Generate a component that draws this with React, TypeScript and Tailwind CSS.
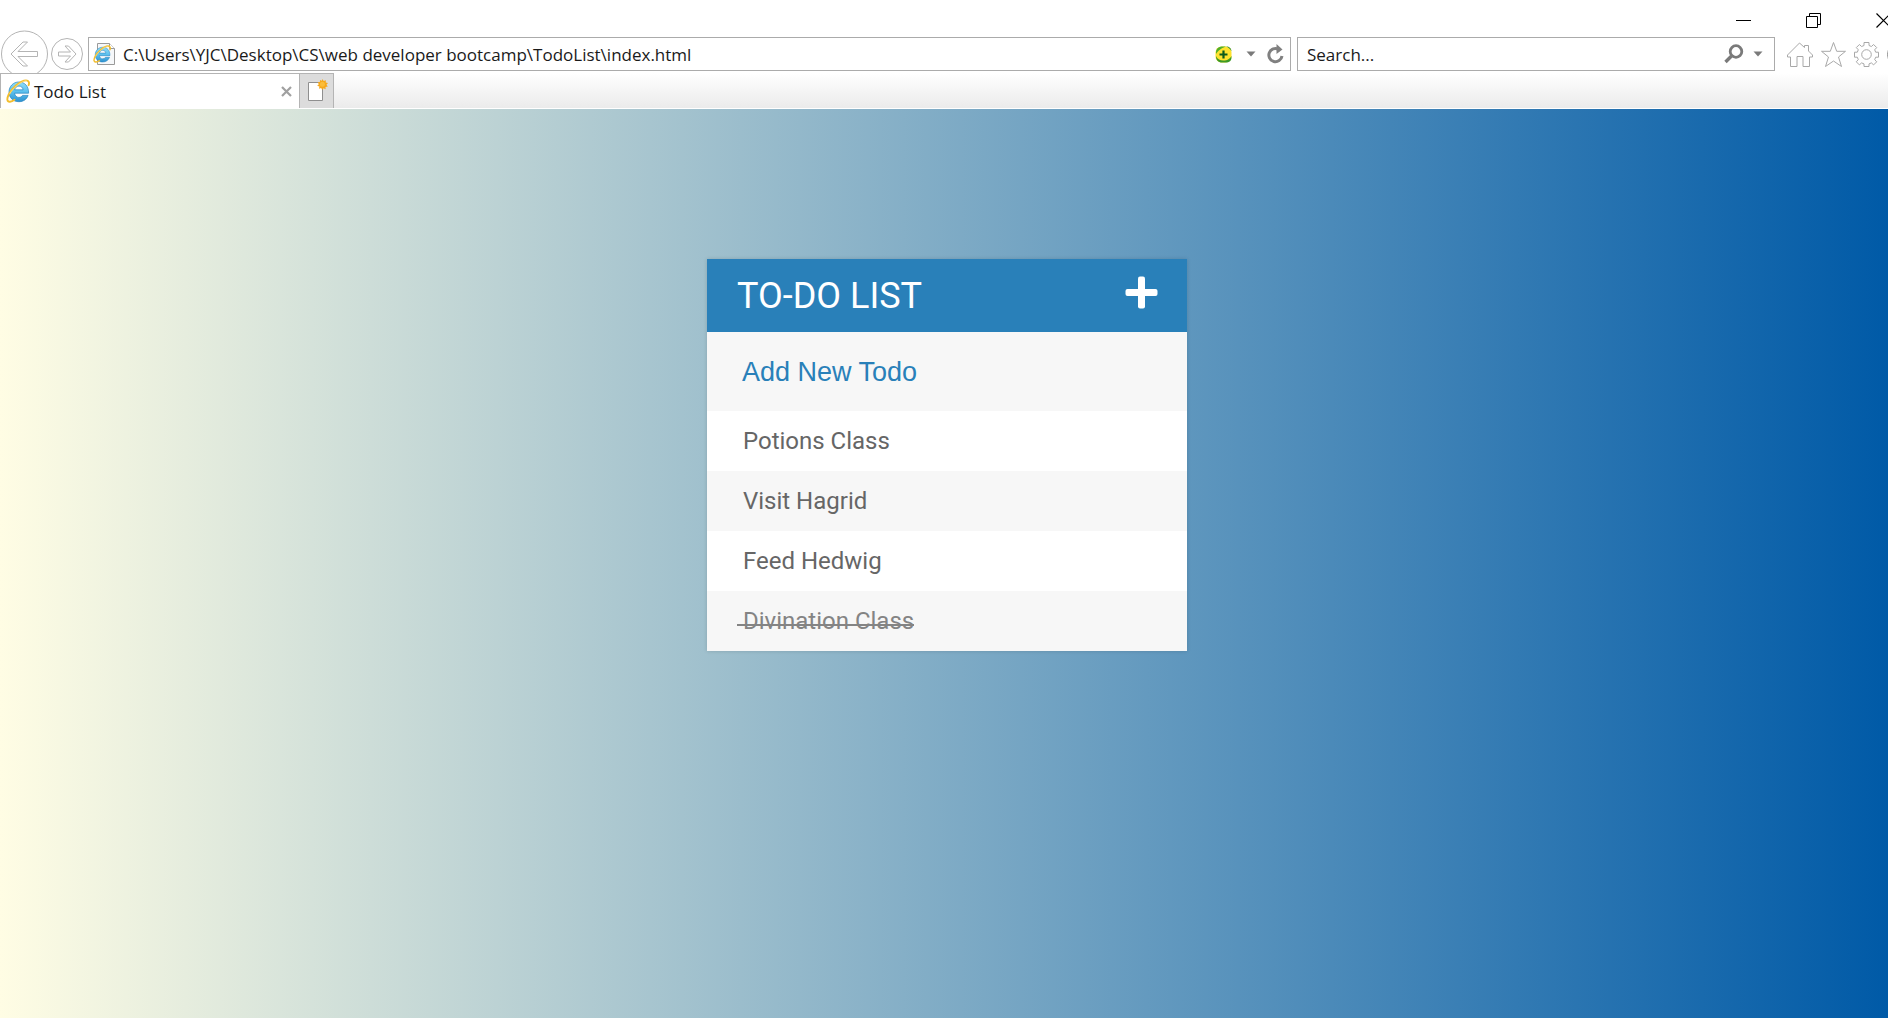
import React, { useId, useState } from "react";

function IeLogo({ className }: { className: string }) {
  const id = useId();
  return (
    <svg viewBox="0 0 24 24" className={className} fill="none" aria-hidden="true">
      <defs>
        <linearGradient id={id} x1="0" y1="0" x2="0" y2="1">
          <stop offset="0" stopColor="#8fdcf8" />
          <stop offset="0.5" stopColor="#5cc0ee" />
          <stop offset="1" stopColor="#2e92d0" />
        </linearGradient>
      </defs>
      <path
        d="M22.600 14.200H8.600c.3 2.700 2 4.200 4.300 4.200 1.600 0 2.900-.7 3.600-2h5.600c-1.400 4-4.900 6.300-9.200 6.300C7 22.700 3 18.600 3 13S7.200 3 12.900 3s9.900 4 9.700 11.200zM8.700 10.800h8.400c-.3-2.300-1.900-3.700-4.100-3.700s-3.900 1.400-4.300 3.700z"
        fill={`url(#${id})`}
        stroke="#2583bf"
        strokeWidth="0.700"
      />
      <path
        d="M22.600 6.200C23.600 3.600 22.800 1.400 20 1.400 14.500 1.500 6 9 2.700 15.500 0.600 19.800 0.900 23 4 22.700c1.500-.1 3-.8 4.500-1.900"
        stroke="#f3bd2c"
        strokeWidth="1.900"
        strokeLinecap="round"
      />
      <path d="M20.500 1.600C15 2.200 7 9 3.600 15" stroke="#fbe38a" strokeWidth="0.800" />
    </svg>
  );
}

function Caret() {
  return (
    <svg viewBox="0 0 10 6" className="h-[6px] w-[10px]" aria-hidden="true">
      <path d="M0.500 0.500h9L5 5.500z" fill="#7a7a7a" />
    </svg>
  );
}

function WindowControls() {
  return (
    <div className="flex h-[37px] items-center justify-end gap-[54px] pt-1 pr-5">
      <button type="button" aria-label="Minimize" className="size-4">
        <svg viewBox="0 0 16 16" className="size-4" fill="none" stroke="#000">
          <path d="M0 7.500h15" />
        </svg>
      </button>
      <button type="button" aria-label="Restore" className="size-4">
        <svg viewBox="0 0 16 16" className="size-4" fill="none" stroke="#000">
          <path d="M0.500 3.500h11v11h-11zM3.500 3.500v-3h11v11h-3" />
        </svg>
      </button>
      <button type="button" aria-label="Close" className="size-4">
        <svg viewBox="0 0 16 16" className="size-4" fill="none" stroke="#000" strokeWidth="1.200">
          <path d="M0.500 0.500l14 14M14.500 0.500l-14 14" />
        </svg>
      </button>
    </div>
  );
}

function NavRow() {
  return (
    <div className="flex h-9 items-start">
      <button type="button" aria-label="Back" className="-mt-[7px] ml-px size-[48px] shrink-0">
        <svg viewBox="0 0 48 48" className="size-[48px]" fill="none" stroke="#b4b4b4">
          <circle cx="23.500" cy="24" r="23" />
          <path d="M10 24l12-12h4.500l-9.500 9.500h19.500v5H17l9.500 9.500H22z" strokeLinejoin="round" />
        </svg>
      </button>
      <button type="button" aria-label="Forward" className="mt-px ml-[2px] size-8 shrink-0">
        <svg viewBox="0 0 32 32" className="size-8" fill="none" stroke="#b4b4b4">
          <circle cx="16" cy="16" r="15.500" />
          <path d="M25 16l-7.500 8h-3.500l5.500-6H7.500v-4h12l-5.500-6h3.500z" strokeLinejoin="round" />
        </svg>
      </button>
      <form
        onSubmit={(e) => e.preventDefault()}
        className="ml-[5px] flex h-[34px] min-w-0 flex-1 items-center border border-[#ababab] bg-white pr-[5px] pl-1"
      >
        <span className="relative block size-[26px] shrink-0">
          <svg viewBox="0 0 26 26" className="size-[26px]" fill="#f6f8fa" stroke="#9a9a9a" aria-hidden="true">
            <path d="M4.500 2.500h12l5 5v16h-17z" />
            <path d="M16.500 2.500v5h5" fill="#fff" />
          </svg>
          <IeLogo className="absolute top-1 left-0 size-[18px]" />
        </span>
        <input
          aria-label="Address"
          defaultValue="C:\Users\YJC\Desktop\CS\web developer bootcamp\TodoList\index.html"
          className="ml-1 min-w-0 flex-1 bg-transparent pt-[2px] font-['Open_Sans',sans-serif] text-[17px] leading-6 text-[#1a1a1a] outline-none"
        />
        <button type="button" aria-label="Add-on" className="size-[17px]">
          <svg viewBox="0 0 17 17" className="size-[17px]">
            <rect x="0.500" y="0.500" width="16" height="16" rx="6" fill="#ffe22e" />
            <path d="M1 6C1.500 2 4 0.500 8 0.500h3C8 1.500 4.500 3 1 8z" fill="#4fae2c" />
            <path d="M11 0.500c3.500 0 5.500 2 5.500 5C15.500 3 13.500 1.500 11 0.500z" fill="#2f8b22" />
            <path d="M1 10c2 4 5 5 9 4.500 3-.5 5-2 6.500-4.500v1c0 4-2 5.500-6 5.500H7c-4 0-6-2.500-6-6.500z" fill="#3c9a26" />
            <path d="M8.500 4.500v8M4.500 8.500h8" stroke="#0d5a1c" strokeWidth="2.200" />
          </svg>
        </button>
        <button type="button" aria-label="Show address history" className="ml-[14px] flex h-6 w-[10px] items-center">
          <Caret />
        </button>
        <button type="button" aria-label="Refresh" className="ml-[11px] h-5 w-[18px]">
          <svg viewBox="0 0 18 20" className="h-5 w-[18px]" fill="none">
            <path d="M11.500 5.200A6.600 6.600 0 1 0 15 12" stroke="#808080" strokeWidth="3" />
            <path d="M9.500 0l6 5.500-6 4.500z" fill="#808080" />
          </svg>
        </button>
      </form>
      <form
        onSubmit={(e) => e.preventDefault()}
        className="ml-[6px] flex h-[34px] w-[478px] items-center border border-[#ababab] bg-white pr-[11px] pl-[9px]"
      >
        <input
          aria-label="Search"
          placeholder="Search..."
          className="min-w-0 flex-1 bg-transparent pt-[2px] font-['Open_Sans',sans-serif] text-[17px] leading-6 text-[#1a1a1a] outline-none placeholder:text-[#1a1a1a]"
        />
        <button type="button" aria-label="Search" className="size-5">
          <svg viewBox="0 0 20 20" className="size-5" fill="none" stroke="#7a7a7a">
            <circle cx="12" cy="7.500" r="5.800" strokeWidth="2.800" />
            <path d="M7.500 12L1.500 18" strokeWidth="3.400" />
          </svg>
        </button>
        <button type="button" aria-label="Search options" className="ml-[9px] flex h-6 w-[10px] items-center">
          <Caret />
        </button>
      </form>
      <div className="ml-3 flex gap-[8px] pt-[5px]">
        <button type="button" aria-label="Home" className="size-[26px]">
          <svg viewBox="0 0 26 26" className="size-[26px]" fill="none" stroke="#a8a8a8" strokeLinejoin="round">
            <path d="M0.500 13L12.500 1l5 4.500v-2h4V9l4 4v2h-3v9.500h-6.500v-10h-6v10H3.500V15h-3z" />
          </svg>
        </button>
        <button type="button" aria-label="Favorites" className="size-[25px]">
          <svg viewBox="0 0 25 25" className="size-[25px]" fill="none" stroke="#a8a8a8" strokeLinejoin="round">
            <path d="M12.500 0.500l3.200 8.800h8.800l-7 5.700 3 9.500-8-5.500-8 5.500 3-9.500-7-5.700h8.800z" />
          </svg>
        </button>
        <button type="button" aria-label="Tools" className="size-[25px]">
          <svg viewBox="0 0 25 25" className="size-[25px]" fill="none" stroke="#a8a8a8" strokeLinejoin="round">
            <path d="M10 0.500h5v3l2.400 1 2.200-2 3.100 3.100-2 2.200 1 2.400h2.800v5h-2.800l-1 2.400 2 2.200-3.100 3.100-2.200-2-2.400 1v2.600h-5v-2.600l-2.400-1-2.200 2-3.100-3.100 2-2.200-1-2.400H0.500v-5h2.800l1-2.400-2-2.200 3.100-3.100 2.200 2 2.400-1z" />
            <circle cx="12.500" cy="12.500" r="4.800" />
          </svg>
        </button>
        <button type="button" aria-label="Feedback" className="size-[25px]">
          <svg viewBox="0 0 25 25" className="size-[25px]" fill="none" stroke="#8a8a8a">
            <circle cx="12.500" cy="12.500" r="12" />
            <path d="M7 15c2 4 9 4 11 0M9 8v2M16 8v2" />
          </svg>
        </button>
      </div>
    </div>
  );
}

function TabRow() {
  return (
    <div className="relative flex h-9 border-b border-white bg-linear-to-b from-white to-[#ebebeb]">
      <div className="flex w-[299px] items-center border-t border-l border-[#b4b4b4] bg-white pr-[7px] pl-[5px]">
        <IeLogo className="size-6" />
        <span className="ml-1 flex-1 pt-[2px] font-['Open_Sans',sans-serif] text-[17px] leading-6 text-[#1a1a1a]">Todo List</span>
        <button type="button" aria-label="Close tab" className="size-[11px]">
          <svg viewBox="0 0 11 11" className="size-[11px]" stroke="#a0a0a0" strokeWidth="2.200">
            <path d="M1 1l9 9M10 1l-9 9" />
          </svg>
        </button>
      </div>
      <button
        type="button"
        aria-label="New tab"
        className="flex w-[35px] items-center justify-center border border-b-0 border-[#b4b4b4] bg-[#dcdcdc]"
      >
        <svg viewBox="0 0 22 24" className="h-6 w-[22px]">
          <path d="M2.500 3.500h14v18h-14z" fill="#fff" stroke="#8f8f8f" />
          <path
            d="M16.500 0l1.200 2 2.200-.8-.2 2.300 2.300.6-1.500 1.600 1.300 1.900-2.300.4.100 2.200-2.100-.9-1.300 1.800-1-2-2.200.6.400-2.200-2.200-.7 1.600-1.500-1.100-2 2.200-.2.100-2.200 1.900.9z"
            fill="#f6a81c"
          />
          <circle cx="16.400" cy="5.200" r="2.500" fill="#fbbd3a" />
        </svg>
      </button>
    </div>
  );
}

const initialTodos = [
  { text: "Potions Class", done: false },
  { text: "Visit Hagrid", done: false },
  { text: "Feed Hedwig", done: false },
  { text: "Divination Class", done: true },
];

function TodoCard() {
  const [todos, setTodos] = useState(initialTodos);
  const [draft, setDraft] = useState("");
  const [open, setOpen] = useState(true);

  const toggle = (index: number) =>
    setTodos(todos.map((t, i) => (i === index ? { ...t, done: !t.done } : t)));

  const add = (e: React.FormEvent) => {
    e.preventDefault();
    if (!draft.trim()) return;
    setTodos([...todos, { text: draft, done: false }]);
    setDraft("");
  };

  return (
    <section className="w-[480px] bg-[#f7f7f7] font-[Roboto,sans-serif] shadow-[0_0_4px_rgba(0,0,0,0.15)]">
      <header className="flex h-[73px] items-center justify-between bg-[#2980b9] pr-[29px] pl-[30px] text-white">
        <h1 className="text-[36px] leading-[54px] font-normal">TO-DO LIST</h1>
        <button type="button" aria-label="Toggle new todo field" className="mb-[7px] size-[33px]" onClick={() => setOpen(!open)}>
          <svg viewBox="0 0 33 33" className="size-[33px]" fill="#fff">
            <rect x="13" y="0.500" width="7" height="32" rx="2" />
            <rect x="0.500" y="13" width="32" height="7" rx="2" />
          </svg>
        </button>
      </header>
      {open && (
        <form onSubmit={add}>
          <input
            aria-label="Add New Todo"
            placeholder="Add New Todo"
            value={draft}
            onChange={(e) => setDraft(e.target.value)}
            className="block h-[79px] w-full bg-[#f7f7f7] px-[35px] pt-[2px] font-['Liberation_Sans',sans-serif] text-[27px] text-[#2980b9] outline-none placeholder:text-[#2980b9]"
          />
        </form>
      )}
      <ul>
        {todos.map((todo, i) => (
          <li
            key={i}
            onClick={() => toggle(i)}
            className="h-[60px] cursor-pointer px-[30px] text-[24px] leading-[60px] text-[#666] odd:bg-white even:bg-[#f7f7f7]"
          >
            <span
              className={
                todo.done
                  ? "relative inline-block text-[#848484] after:absolute after:inset-x-0 after:top-[33px] after:h-[2px] after:bg-[#848484]"
                  : ""
              }
            >
              {"\u00a0" + todo.text}
            </span>
          </li>
        ))}
      </ul>
    </section>
  );
}

export default function App() {
  return (
    <div className="flex min-h-screen flex-col overflow-x-hidden bg-white">
      <div className="-mr-6">
        <WindowControls />
        <NavRow />
        <TabRow />
      </div>
      <main className="flex flex-1 items-start justify-center bg-linear-to-r/srgb from-[#fffde4] to-[#005aa7] pt-[150px] pl-[6px]">
        <TodoCard />
      </main>
    </div>
  );
}
